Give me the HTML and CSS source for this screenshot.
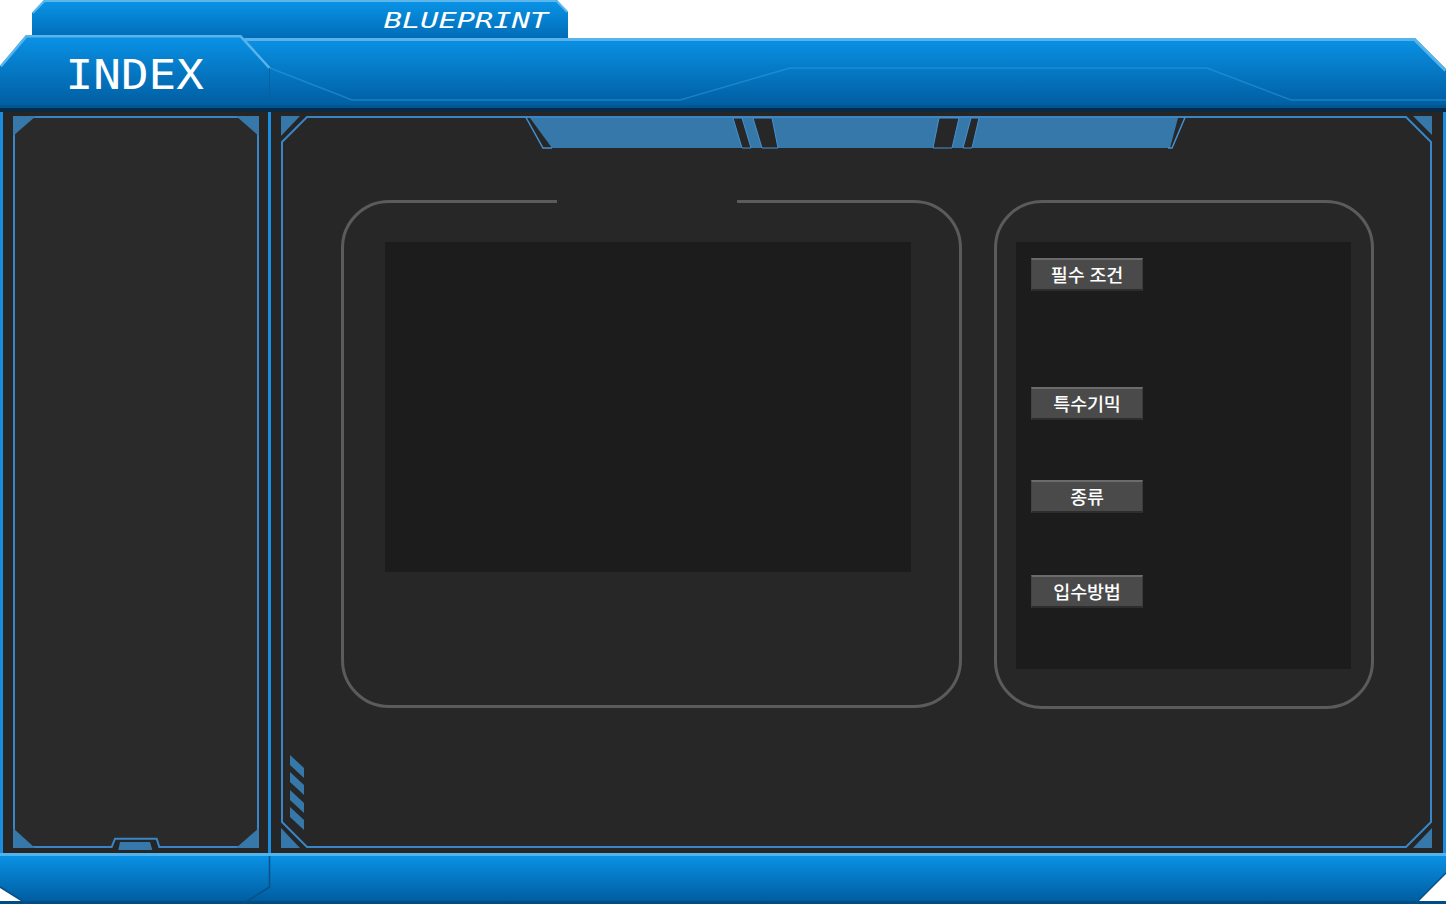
FILE: index.html
```html
<!DOCTYPE html>
<html lang="ko">
<head>
<meta charset="utf-8">
<title>Blueprint Index</title>
<link rel="stylesheet" href="styles.css">
</head>
<body>
<div class="app">
  <header class="top">
    <svg class="deco" width="1446" height="112" viewBox="0 0 1446 112" aria-hidden="true">
      <defs>
        <linearGradient id="gTab" gradientUnits="userSpaceOnUse" x1="0" y1="0" x2="0" y2="40">
          <stop offset="0" stop-color="#0a95e9"/>
          <stop offset="1" stop-color="#006ab4"/>
        </linearGradient>
        <linearGradient id="gBar" gradientUnits="userSpaceOnUse" x1="0" y1="38" x2="0" y2="108">
          <stop offset="0" stop-color="#0a92e6"/>
          <stop offset="1" stop-color="#005c9f"/>
        </linearGradient>
        <linearGradient id="gIdx" gradientUnits="userSpaceOnUse" x1="0" y1="35" x2="0" y2="108">
          <stop offset="0" stop-color="#0a93e7"/>
          <stop offset="1" stop-color="#005c9f"/>
        </linearGradient>
      </defs>
      <polygon points="32,13 44,0 557,0 568,12 568,40 32,40" fill="url(#gTab)"/>
      <polyline points="32.8,13 44.4,1 556.6,1 567.4,12" fill="none" stroke="#5db6ec" stroke-width="2"/>
      <polygon points="240,38 1415,38 1446,69 1446,112 240,112" fill="url(#gBar)"/>
      <polyline points="240,39.5 1414.4,39.5 1445.5,70.5" fill="none" stroke="#58b3ea" stroke-width="3"/>
      <polyline points="270,68 352,100 680,100 790,68 1207,68 1291,100 1446,100" fill="none" stroke="#36a4e8" stroke-opacity="0.45" stroke-width="1.5"/>
      <polygon points="0,66 26,35 241,35 270,67 270,112 0,112" fill="url(#gIdx)"/>
      <polyline points="0.8,66.5 26.5,36.2 240.5,36.2 269.5,68" fill="none" stroke="#5ab4ec" stroke-width="2.5"/>
      <line x1="269.5" y1="68" x2="269.5" y2="108" stroke="#0a5f9c" stroke-width="1"/>
      <rect x="0" y="105" width="1446" height="3" fill="#00568f"/>
      <rect x="0" y="108" width="1446" height="4" fill="#0a2b47"/>
    </svg>
    <div class="brand"><span class="brand-text">BLUEPRINT</span></div>
    <div class="index"><span class="index-text">INDEX</span></div>
  </header>

  <div class="body">
    <aside class="side">
      <div class="side-panel">
        <svg class="deco" width="246" height="732" viewBox="0 0 246 732" aria-hidden="true">
          <path d="M1,1 H245 V731 H146.3 L143.7,722.7 H102 L98.7,731 H1 Z" fill="#2a2a2a" stroke="#3886c8" stroke-width="2"/>
          <polygon points="0,0 23,0 0,20" fill="#3778aa"/>
          <polygon points="223,0 246,0 246,20" fill="#3778aa"/>
          <polygon points="0,712 0,732 22,732" fill="#3778aa"/>
          <polygon points="246,712 246,732 223,732" fill="#3778aa"/>
          <polygon points="107,726 137,726 139.3,734 105.3,734" fill="#3778aa"/>
        </svg>
      </div>
    </aside>

    <main class="main">
      <div class="main-panel">
        <svg class="deco" width="1151" height="732" viewBox="0 0 1151 732" aria-hidden="true">
          <path d="M26,1 H1125 L1150,26 V706 L1125,731 H26 L1,706 V26 Z" fill="#272727" stroke="#3886c8" stroke-width="2"/>
          <polygon points="0,0 19,0 0,20" fill="#3778aa"/>
          <polygon points="1132,0 1151,0 1151,19" fill="#3778aa"/>
          <polygon points="0,712 0,732 19,732" fill="#3778aa"/>
          <polygon points="1132,732 1151,732 1151,712" fill="#3778aa"/>
          <polygon points="249,2 897,2 889,32 271,32" fill="#3778aa"/>
          <polyline points="245,1.5 262,32 271,32" fill="none" stroke="#4690d0" stroke-width="1.5"/>
          <polyline points="904,1.5 891,32 887,32" fill="none" stroke="#4690d0" stroke-width="1.5"/>
          <polygon points="452,2 461,2 470,32 461,32" fill="#272727" stroke="#4690d0" stroke-width="1"/>
          <polygon points="472,2 491,2 497,32 481,32" fill="#272727" stroke="#4690d0" stroke-width="1"/>
          <polygon points="658,2 678,2 671,32 652,32" fill="#272727" stroke="#4690d0" stroke-width="1"/>
          <polygon points="690,2 698,2 691,32 682,32" fill="#272727" stroke="#4690d0" stroke-width="1"/>
          <polygon points="9,639 23,652 23,662 9,649" fill="#3778aa"/>
          <polygon points="9,656 23,669 23,679 9,666" fill="#3778aa"/>
          <polygon points="9,674 23,687 23,697 9,684" fill="#3778aa"/>
          <polygon points="9,691 23,704 23,714 9,701" fill="#3778aa"/>
        </svg>
        <div class="main-content">
          <section class="frame frame-media">
            <div class="media"></div>
          </section>
          <section class="frame frame-info">
            <div class="info">
              <div class="field field-req"><div class="btn">필수 조건</div></div>
              <div class="field field-gim"><div class="btn">특수기믹</div></div>
              <div class="field field-kind"><div class="btn">종류</div></div>
              <div class="field"><div class="btn">입수방법</div></div>
            </div>
          </section>
        </div>
      </div>
    </main>
  </div>

  <footer class="bottom">
    <svg class="deco" width="1446" height="51" viewBox="0 0 1446 51" aria-hidden="true">
      <defs>
        <linearGradient id="gFoot" gradientUnits="userSpaceOnUse" x1="0" y1="2" x2="0" y2="49">
          <stop offset="0" stop-color="#0a92e6"/>
          <stop offset="1" stop-color="#005c9f"/>
        </linearGradient>
      </defs>
      <polygon points="240,0 1446,0 1446,20 1415,51 240,51" fill="url(#gFoot)"/>
      <polygon points="0,0 270,0 270,34 243,51 27,51 0,34" fill="url(#gFoot)"/>
      <rect x="0" y="0" width="1446" height="3" fill="#52b2eb"/>
      <rect x="0" y="48" width="1446" height="3" fill="#004c84"/>
      <polyline points="269.5,3 269.5,34 243,51" fill="none" stroke="#0a4f86" stroke-width="1.5"/>
      <line x1="0" y1="34" x2="27" y2="51" stroke="#0a4f86" stroke-width="1.5"/>
      <line x1="1446" y1="20" x2="1415" y2="51" stroke="#0a4f86" stroke-width="1.5"/>
    </svg>
  </footer>
</div>
</body>
</html>
```

FILE: styles.css
```css
* {
  box-sizing: border-box;
  margin: 0;
  padding: 0;
}

html,
body {
  background: #ffffff;
}

body {
  width: 1446px;
  height: 904px;
  overflow: hidden;
  font-family: "Noto Sans CJK KR", "Noto Sans", sans-serif;
}

.app {
  width: 1446px;
  height: 904px;
  display: flex;
  flex-direction: column;
}

.deco {
  position: absolute;
  left: 0;
  top: 0;
  display: block;
  overflow: visible;
}

/* ---------- header ---------- */
.top {
  position: relative;
  flex: none;
  height: 112px;
  display: grid;
  grid-template-columns: 270px 298px 1fr;
  grid-template-rows: 38px 74px;
}

.brand {
  position: relative;
  grid-column: 1 / 3;
  grid-row: 1;
  justify-self: end;
  padding-right: 20px;
  padding-top: 9px;
}

.brand-text {
  display: inline-block;
  font-family: "DejaVu Sans Mono", monospace;
  font-style: oblique;
  font-size: 22px;
  line-height: 22px;
  color: #ffffff;
  transform: scaleX(1.38);
  transform-origin: right center;
}

.index {
  position: relative;
  grid-column: 1;
  grid-row: 2;
  text-align: center;
  padding-top: 17px;
}

.index-text {
  display: inline-block;
  font-family: "DejaVu Sans Mono", monospace;
  font-size: 41px;
  line-height: 41px;
  color: #ffffff;
  transform: scaleX(1.12);
  transform-origin: center;
}

/* ---------- body ---------- */
.body {
  flex: none;
  height: 741px;
  display: flex;
  background: #262626;
  border-left: 3px solid #1a8de0;
}

.side {
  flex: none;
  width: 265px;
  padding: 4px 9px 5px 10px;
}

.side-panel {
  position: relative;
  height: 100%;
}

.main {
  flex: 1;
  border-left: 3px solid #1a8de0;
  border-right: 3px solid #1a8de0;
  padding: 4px 11px 5px 10px;
}

.main-panel {
  position: relative;
  height: 100%;
}

.main-content {
  position: relative;
  display: flex;
  align-items: flex-start;
  gap: 32px;
  padding: 84px 0 0 60px;
}

.frame {
  position: relative;
  border: 3px solid #5b5b5b;
  border-radius: 48px;
}

.frame-media {
  width: 621px;
  height: 508px;
  padding: 39px 0 0 41px;
}

.frame-media::before {
  content: "";
  position: absolute;
  top: -3px;
  left: 213px;
  width: 180px;
  height: 3px;
  background: #272727;
}

.media {
  width: 526px;
  height: 330px;
  background: #1c1c1c;
}

.frame-info {
  width: 380px;
  height: 509px;
  padding: 39px 0 0 19px;
}

.info {
  width: 335px;
  height: 427px;
  background: #1c1c1c;
  padding: 16px 0 0 15px;
  display: flex;
  flex-direction: column;
}

.field-req {
  height: 129px;
}

.field-gim {
  height: 93px;
}

.field-kind {
  height: 95px;
}

.btn {
  width: 112px;
  height: 33px;
  display: flex;
  align-items: center;
  justify-content: center;
  padding-bottom: 1px;
  background: #4a4a4a;
  border-top: 2px solid #6b6b6b;
  border-bottom: 2px solid #2d2d2d;
  border-left: 1px solid #434343;
  border-right: 1px solid #3c3c3c;
  color: #ffffff;
  font-family: "Noto Sans CJK KR", "Noto Sans", sans-serif;
  font-weight: 500;
  font-size: 18.5px;
  line-height: 1;
  letter-spacing: -0.2px;
  white-space: nowrap;
}

/* ---------- footer ---------- */
.bottom {
  position: relative;
  flex: none;
  height: 51px;
}
```
